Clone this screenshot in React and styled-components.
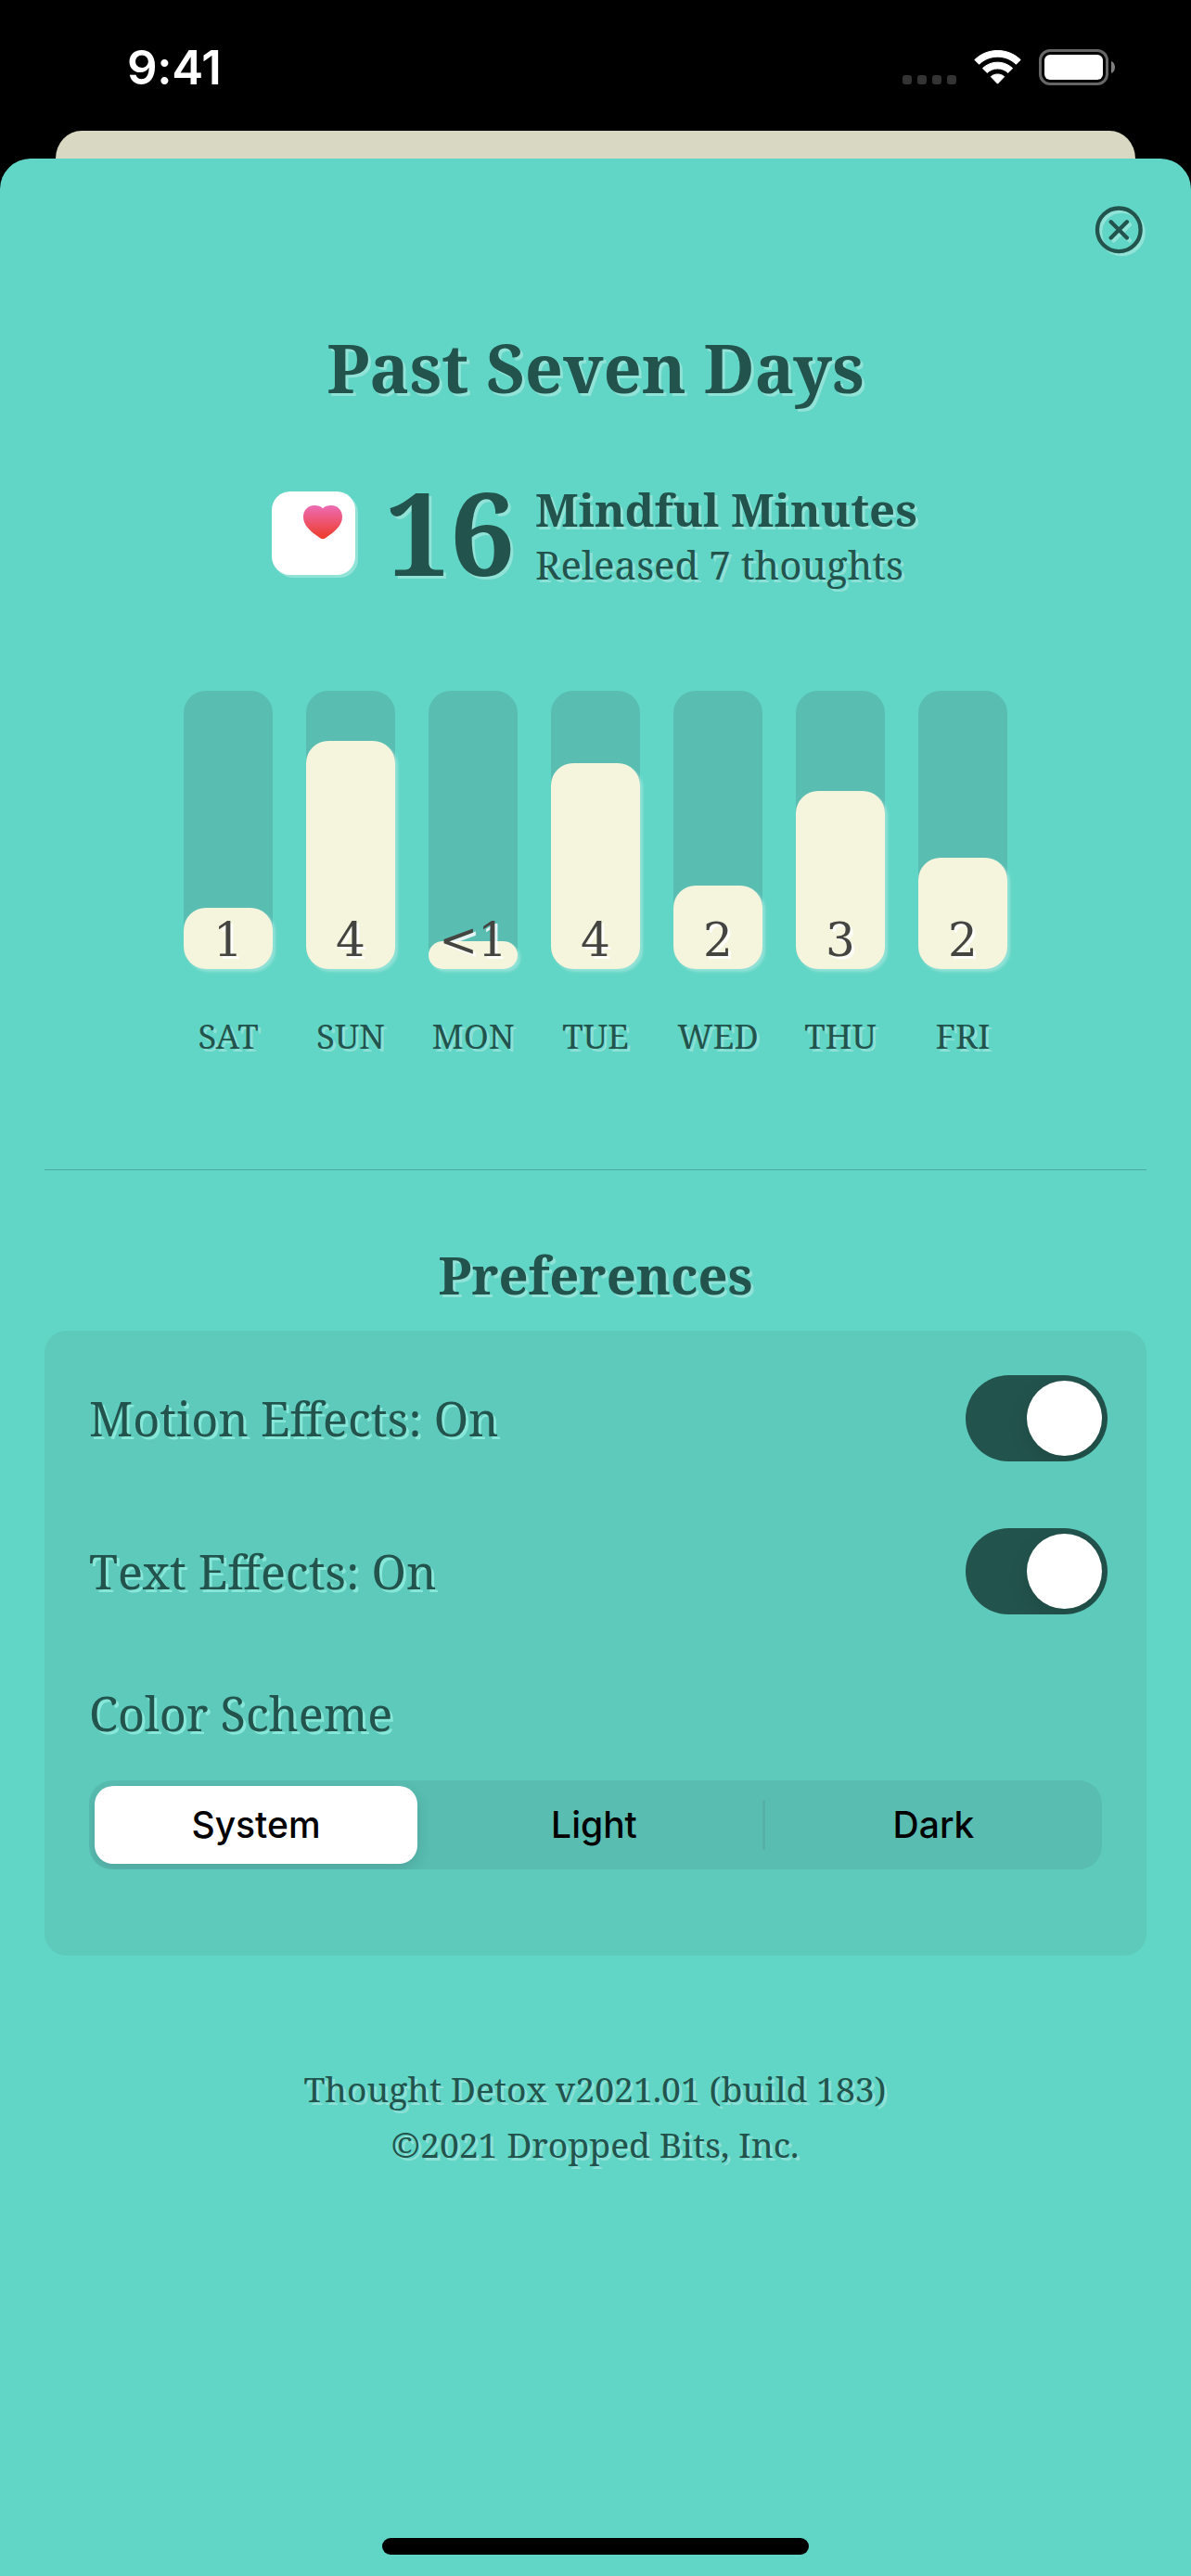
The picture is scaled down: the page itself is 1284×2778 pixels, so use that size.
import React from 'react';
import styled, { createGlobalStyle } from 'styled-components';

const ink = '#22534C';
const mint = '#62D6C6';
const highlight = 'rgba(255, 255, 255, 0.3)';
const serif = '"Noto Serif", "DejaVu Serif Condensed", "DejaVu Serif", serif';
const sans = 'Inter, "Liberation Sans", sans-serif';

const GlobalStyle = createGlobalStyle`
  * { box-sizing: border-box; }
  body { margin: 0; background: #000; }
`;

const Screen = styled.div`
  width: 1284px;
  height: 2778px;
  display: flex;
  flex-direction: column;
  background: #000;
  overflow: hidden;
  font-family: ${serif};
  color: ${ink};
`;

const StatusBar = styled.header`
  height: 141px;
  flex: none;
  display: flex;
  justify-content: space-between;
  align-items: flex-start;
  padding: 43px 82px 0 137px;
`;

const Clock = styled.span`
  font: 600 51px/60px ${sans};
  letter-spacing: -0.3px;
  color: #fff;
`;

const StatusIcons = styled.div`
  display: flex;
  padding-top: 10px;
`;

const BackCard = styled.div`
  height: 30px;
  flex: none;
  margin: 0 60px;
  border-radius: 28px 28px 0 0 / 30px 30px 0 0;
  background: #D9D9C3;
`;

const Sheet = styled.main`
  flex: 1;
  display: flex;
  flex-direction: column;
  align-items: center;
  padding-bottom: 23px;
  border-radius: 33px 33px 0 0;
  background: ${mint};
`;

const SheetHeader = styled.div`
  align-self: stretch;
  display: flex;
  justify-content: flex-end;
  padding: 50px 51px 0 0;
`;

const CloseButton = styled.button`
  width: 54px;
  height: 54px;
  padding: 0;
  border: 0;
  background: none;
  svg { display: block; overflow: visible; filter: drop-shadow(3px 3px 0 ${highlight}); }
`;

const Title = styled.h1`
  margin: 81px 0 0;
  font-size: 72px;
  line-height: 80px;
  font-weight: 700;
  text-shadow: 3px 3px 0 ${highlight};
`;

const Summary = styled.section`
  display: flex;
  align-items: flex-start;
  align-self: stretch;
  margin-top: 83px;
  padding-left: 293px;
  height: 120px;
  text-shadow: 3px 3px 0 ${highlight};
`;

const HealthIcon = styled.div`
  width: 90px;
  height: 90px;
  margin-top: 11px;
  padding: 15px 0 0 34px;
  border-radius: 20px;
  background: #fff;
  box-shadow: 3px 3px 0 ${highlight};
  svg { display: block; }
`;

const Score = styled.div`
  width: 162px;
  margin: 9px 0 0 32px;
  font-size: 124px;
  line-height: 90px;
  font-weight: 700;
`;

const SummaryText = styled.div`
  line-height: 60px;
  white-space: nowrap;
`;

const SummaryHeading = styled.div`
  font-size: 49px;
  font-weight: 700;
`;

const SummaryDetail = styled.div`
  font-size: 42px;
`;

const Chart = styled.section`
  display: flex;
  gap: 36px;
  margin-top: 106px;
`;

const Day = styled.div`
  width: 96px;
  display: flex;
  flex-direction: column;
  align-items: center;
`;

const Track = styled.div`
  position: relative;
  width: 96px;
  height: 300px;
  display: flex;
  align-items: flex-end;
  border-radius: 24px;
  background: #59BDB2;
`;

const Fill = styled.div`
  width: 100%;
  height: ${(p) => p.$height}px;
  border-radius: 24px;
  background: #F5F5DE;
  box-shadow: 3px 3px 3px ${highlight};
`;

const Value = styled.span`
  position: absolute;
  inset: auto -10px 1px;
  font-family: "DejaVu Serif", serif;
  font-size: 50px;
  line-height: 60px;
  text-align: center;
  color: #444440;
  text-shadow: 3px 3px 0 rgba(255, 255, 255, 0.85);
`;

const DayLabel = styled.span`
  margin-top: 46.5px;
  font-size: 36.5px;
  line-height: 50px;
  text-shadow: 3px 3px 0 ${highlight};
`;

const Divider = styled.hr`
  align-self: stretch;
  height: 1px;
  margin: 119px 48px 0;
  border: 0;
  background: #4CAA9E;
`;

const SectionTitle = styled.h2`
  margin: 77px 0 26px;
  font-size: 56px;
  line-height: 70px;
  font-weight: 700;
  text-shadow: 3px 3px 0 ${highlight};
`;

const Panel = styled.section`
  width: 1188px;
  height: 674px;
  padding: 48px;
  border-radius: 24px;
  background: #5ECABB;
`;

const Setting = styled.div`
  display: flex;
  justify-content: space-between;
  align-items: center;
  height: 93px;
  margin: 0 -6px 72px 0;
`;

const SettingLabel = styled.span`
  padding-top: 2px;
  font-size: 50.4px;
  line-height: 60px;
  font-kerning: none;
  text-shadow: 3px 3px 0 rgba(150, 240, 225, 0.75);
`;

const SchemeLabel = styled(SettingLabel)`
  display: block;
  padding-top: 5px;
`;

const Toggle = styled.button`
  width: 153px;
  height: 93px;
  display: flex;
  justify-content: flex-end;
  padding: 6px;
  border: 0;
  border-radius: 47px;
  background: ${ink};
  overflow: hidden;
`;

const Knob = styled.span`
  width: 81px;
  height: 81px;
  border-radius: 50%;
  background: #fff;
  box-shadow: 0 8px 22px rgba(0, 0, 0, 0.1);
`;

const Segments = styled.div`
  display: flex;
  align-items: center;
  height: 96px;
  margin-top: 42px;
  padding-left: 6px;
  border-radius: 25px;
  background: #59BDB2;
  overflow: hidden;
`;

const Segment = styled.button`
  flex: 0 0 ${(p) => (p.$selected ? 348 : 363)}px;
  height: 84px;
  margin-right: ${(p) => (p.$selected ? 9 : 0)}px;
  padding: 0;
  border: 0;
  border-radius: 20px;
  background: ${(p) => (p.$selected ? '#fff' : 'transparent')};
  box-shadow: ${(p) => (p.$selected ? '0 6px 16px rgba(0, 0, 0, 0.13)' : 'none')};
  font: ${(p) => (p.$selected ? 550 : 450)} 39px/84px ${sans};
  color: #000;
`;

const SegmentDivider = styled.span`
  flex: none;
  width: 3px;
  height: 54px;
  border-radius: 2px;
  background: #55B0A6;
`;

const Footer = styled.footer`
  margin-top: 114.5px;
  padding-right: 1px;
  font-size: 37.3px;
  line-height: 60px;
  text-align: center;
  text-shadow: 3px 3px 0 ${highlight};
`;

const HomeIndicator = styled.div`
  width: 460px;
  height: 18px;
  margin-top: auto;
  border-radius: 9px;
  background: #000;
`;

const days = [
  { name: 'SAT', value: '1', height: 66 },
  { name: 'SUN', value: '4', height: 246 },
  { name: 'MON', value: '<1', height: 30 },
  { name: 'TUE', value: '4', height: 222 },
  { name: 'WED', value: '2', height: 90 },
  { name: 'THU', value: '3', height: 192 },
  { name: 'FRI', value: '2', height: 120 },
];

function StatusGlyphs() {
  return (
    <svg width="230" height="40" viewBox="0 0 230 40" fill="none">
      {[0, 16, 32, 48].map((x) => (
        <rect key={x} x={x + 1} y="28" width="10" height="10" rx="3" fill="#333" />
      ))}
      <g fill="#fff" stroke="#fff" strokeWidth="1" strokeLinejoin="round">
        <path d="M103.5 1.5C94 1.5 85.200 5.200 78.800 11.500L83.600 16.300C89 11 96 8.200 103.500 8.200S118 11 123.400 16.300L128.200 11.500C121.800 5.200 113 1.500 103.500 1.500Z" />
        <path d="M103.500 14.200C97.200 14.200 91.600 16.600 87.400 20.700L92.300 25.500C95.300 22.600 99.200 21 103.500 21S111.700 22.600 114.700 25.500L119.600 20.700C115.400 16.600 109.800 14.200 103.500 14.200Z" />
        <path d="M103.500 27C100.700 27 98.200 27.900 96.300 29.700L103.500 37.200L110.700 29.700C108.800 27.900 106.300 27 103.500 27Z" />
      </g>
      <rect x="149.500" y="1.500" width="72" height="36" rx="10.500" stroke="#666" strokeWidth="3" />
      <rect x="154" y="6" width="63" height="27" rx="6" fill="#fff" />
      <path d="M226 13C228.700 14.200 230 16.600 230 19.500S228.700 24.800 226 26Z" fill="#808080" />
    </svg>
  );
}

function CloseIcon() {
  return (
    <svg width="54" height="54" viewBox="0 0 54 54" fill="none" stroke={ink} strokeWidth="4.300" strokeLinecap="round">
      <circle cx="27.300" cy="26.800" r="23.300" />
      <path d="M18.700 18.200L35.900 35.400M35.900 18.200L18.700 35.400" />
    </svg>
  );
}

function Heart() {
  return (
    <svg width="42" height="37" viewBox="0 0 42 37">
      <defs>
        <linearGradient id="heart" x1="0" y1="0" x2="0" y2="1">
          <stop offset="0" stopColor="#ED6BB4" />
          <stop offset="1" stopColor="#EE3C27" />
        </linearGradient>
      </defs>
      <path
        fill="url(#heart)"
        d="M21 3.300C23 1 26.500 0 30 0C37.200 0 42 5.500 42 12.500C42 21.500 34.500 28.200 23.800 35.200C22 36.600 20 36.600 18.200 35.200C7.500 28.200 0 21.500 0 12.500C0 5.500 4.800 0 12 0C15.500 0 19 1 21 3.300Z"
      />
    </svg>
  );
}

export default function App() {
  return (
    <Screen>
      <GlobalStyle />
      <StatusBar>
        <Clock>9:41</Clock>
        <StatusIcons><StatusGlyphs /></StatusIcons>
      </StatusBar>
      <BackCard />
      <Sheet>
        <SheetHeader>
          <CloseButton aria-label="Close"><CloseIcon /></CloseButton>
        </SheetHeader>
        <Title>Past Seven Days</Title>
        <Summary>
          <HealthIcon><Heart /></HealthIcon>
          <Score>16</Score>
          <SummaryText>
            <SummaryHeading>Mindful Minutes</SummaryHeading>
            <SummaryDetail>Released 7 thoughts</SummaryDetail>
          </SummaryText>
        </Summary>
        <Chart>
          {days.map((day) => (
            <Day key={day.name}>
              <Track>
                <Fill $height={day.height} />
                <Value>{day.value}</Value>
              </Track>
              <DayLabel>{day.name}</DayLabel>
            </Day>
          ))}
        </Chart>
        <Divider />
        <SectionTitle>Preferences</SectionTitle>
        <Panel>
          <Setting>
            <SettingLabel>Motion Effects: On</SettingLabel>
            <Toggle aria-label="Motion Effects"><Knob /></Toggle>
          </Setting>
          <Setting>
            <SettingLabel>Text Effects: On</SettingLabel>
            <Toggle aria-label="Text Effects"><Knob /></Toggle>
          </Setting>
          <SchemeLabel>Color Scheme</SchemeLabel>
          <Segments>
            <Segment $selected>System</Segment>
            <Segment>Light</Segment>
            <SegmentDivider />
            <Segment>Dark</Segment>
          </Segments>
        </Panel>
        <Footer>
          <div>Thought Detox v2021.01 (build 183)</div>
          <div>©2021 Dropped Bits, Inc.</div>
        </Footer>
        <HomeIndicator />
      </Sheet>
    </Screen>
  );
}
